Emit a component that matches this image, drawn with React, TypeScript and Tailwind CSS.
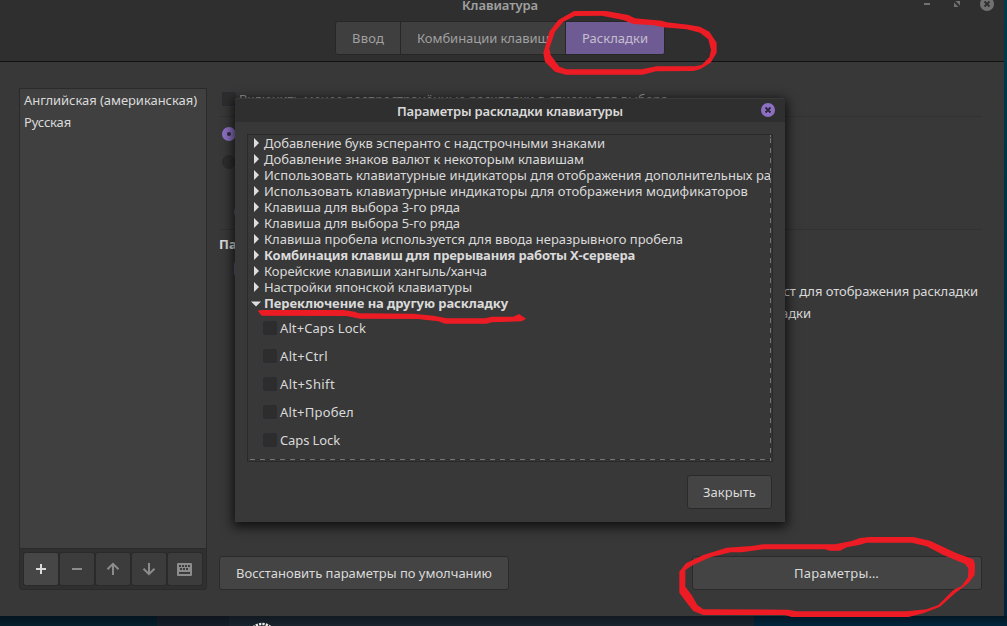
import React, { useLayoutEffect, useRef } from "react";

type TextProps = { w: number; children: string; className?: string };

/* Text spaced out so that its line takes exactly w pixels. */
function T({ w, children, className = "" }: TextProps) {
  const ref = useRef<HTMLSpanElement>(null);
  useLayoutEffect(() => {
    const el = ref.current;
    if (!el) return;
    el.style.letterSpacing = "0px";
    const natural = el.getBoundingClientRect().width;
    el.style.letterSpacing = `${(w - natural) / children.length}px`;
  }, [w, children]);
  return (
    <span ref={ref} className={`inline-block shrink-0 whitespace-pre ${className}`}>
      {children}
    </span>
  );
}

const groups: { text: string; w: number; bold?: boolean; open?: boolean }[] = [
  { text: "Добавление букв эсперанто с надстрочными знаками", w: 341 },
  { text: "Добавление знаков валют к некоторым клавишам", w: 320 },
  { text: "Использовать клавиатурные индикаторы для отображения дополнительных раскладок", w: 558 },
  { text: "Использовать клавиатурные индикаторы для отображения модификаторов", w: 484 },
  { text: "Клавиша для выбора 3-го ряда", w: 196 },
  { text: "Клавиша для выбора 5-го ряда", w: 196 },
  { text: "Клавиша пробела используется для ввода неразрывного пробела", w: 419 },
  { text: "Комбинация клавиш для прерывания работы X-сервера", w: 371, bold: true },
  { text: "Корейские клавиши хангыль/ханча", w: 223 },
  { text: "Настройки японской клавиатуры", w: 208 },
  { text: "Переключение на другую раскладку", w: 244, bold: true, open: true },
];

const options = [
  { text: "Alt+Caps Lock", w: 86 },
  { text: "Alt+Ctrl", w: 48 },
  { text: "Alt+Shift", w: 55 },
  { text: "Alt+Пробел", w: 74 },
  { text: "Caps Lock", w: 60 },
];

function Check() {
  return <span className="h-[14px] w-[14px] shrink-0 rounded-[2px] border border-[#2b2b33] bg-[#2d2d2d]" />;
}

function CloseIcon({ disc, mark }: { disc: string; mark: string }) {
  return (
    <svg width="14" height="14" viewBox="0 0 14 14" className="block">
      <circle cx="7" cy="7" r="7" fill={disc} />
      <path d="M4.500 4.500l5 5M9.500 4.500l-5 5" stroke={mark} strokeWidth="1.800" />
    </svg>
  );
}

function ToolButton({ active, children }: { active?: boolean; children: React.ReactNode }) {
  return (
    <div
      className={`flex h-8 w-[34px] items-center justify-center rounded-[2px] ${
        active ? "bg-[#464646] text-[#dadada]" : "bg-[#3c3c3c] text-[#8c8c8c]"
      } shadow-[0_0_0_1px_#2a2a2a]`}
    >
      <svg width="16" height="16" viewBox="0 0 16 16" fill="none" stroke="currentColor" strokeWidth="2">
        {children}
      </svg>
    </div>
  );
}

function Header() {
  return (
    <header className="relative flex h-[62px] flex-col items-center border-b border-[#111] bg-[#2f2f2f] text-[#a0a0a0]">
      <div className="flex h-[21px] w-full items-start justify-center pr-1">
        <T w={76} className="-mt-[4px] font-semibold leading-[18px]">Клавиатура</T>
      </div>
      <div className="ml-[335px] flex h-[34px] w-[330px] self-start overflow-hidden rounded-[3px] border border-[#272727] bg-[#3f3f3f]">
        <div className="flex w-[65px] items-center justify-center border-r border-[#272727]">
          <T w={32}>Ввод</T>
        </div>
        <div className="flex w-[165px] items-center border-r border-[#272727] pl-4">
          <T w={132}>Комбинации клавиш</T>
        </div>
        <div className="flex flex-1 items-center justify-center bg-[#6f5b93] text-[#c4bed0]">
          <T w={66}>Раскладки</T>
        </div>
      </div>
      <div className="absolute right-[10px] top-[-3px] flex h-[14px] items-center text-[#717171]">
        <svg width="66" height="14" viewBox="0 0 66 14" fill="currentColor" className="mr-[-10px]">
          <path d="M0 6h6v2H0zM31.500 4h4.500v4.500zM30 5.500v4.500h4.500z" />
        </svg>
        <CloseIcon disc="#717171" mark="#2f2f2f" />
      </div>
    </header>
  );
}

function Sidebar() {
  return (
    <aside className="flex h-[502px] w-[188px] shrink-0 flex-col rounded-b-[3px] border border-[#2a2a2a] bg-[#303030]">
      <div className="flex h-[460px] flex-col items-start border-b border-[#2a2a2a] bg-[#404040] pl-1">
        <T w={173} className="h-[22px] leading-[23px]">Английская (американская)</T>
        <T w={47} className="h-[22px] leading-[23px]">Русская</T>
      </div>
      <div className="flex flex-1 items-center gap-[2px] pl-1">
        <ToolButton active>
          <path d="M3 8h10M8 3v10" />
        </ToolButton>
        <ToolButton>
          <path d="M3 8h10" />
        </ToolButton>
        <ToolButton>
          <path d="M8 14V3M2.500 8.300L8 2.800l5.500 5.500" />
        </ToolButton>
        <ToolButton>
          <path d="M8 2v11M2.500 7.700L8 13.200l5.500-5.500" />
        </ToolButton>
        <ToolButton>
          <g stroke="none">
            <rect x="0" y="2" width="15" height="13" rx="1" fill="currentColor" />
            <path
              d="M2 4h2v2H2zM5 4h2v2H5zM8 4h2v2H8zM11 4h2v2h-2zM3 7h2v2H3zM6 7h2v2H6zM9 7h2v2H9zM2 11h11v2H2z"
              fill="#3c3c3c"
            />
          </g>
        </ToolButton>
      </div>
    </aside>
  );
}

function Settings() {
  return (
    <main className="ml-3 flex h-[502px] w-[763px] flex-col">
      <div className="flex h-[29px] items-center gap-[3px] border-b border-[#313131] pb-[6px] pl-[3px]">
        <Check />
        <T w={429} className="-mt-px text-[#969696]">Включить менее распространённые раскладки в список для выбора</T>
      </div>
      <div className="flex h-[113px] flex-col gap-[14px] border-b border-[#313131] pl-[3px] pt-[10px]">
        <span className="flex h-[14px] w-[14px] items-center justify-center rounded-full bg-[#8d70c4]">
          <span className="h-1 w-1 rounded-full bg-[#2d2d38]" />
        </span>
        <span className="h-[14px] w-[14px] rounded-full border border-[#2b2b33] bg-[#2d2d2d]" />
        <span className="ml-[12px] mt-[22px] h-[14px] w-[14px] rounded-full bg-[#6f5b93]" />
      </div>
      <div className="flex h-[32px] items-center pb-[4px]">
        <T w={78} className="font-bold">Параметры</T>
      </div>
      <div className="ml-[15px] h-[14px] w-[14px] rounded-[2px] bg-[#6f5b93]" />
      <div className="flex h-[22px] items-center justify-end pr-1 pt-[8px]">
        <T w={214}>текст для отображения раскладки</T>
      </div>
      <div className="flex h-[22px] items-center justify-end pr-[171px] pt-[8px]">
        <T w={66}>раскладки</T>
      </div>
      <div className="mt-auto flex justify-between">
        <button className="flex h-[34px] w-[290px] items-center justify-center rounded-[3px] border border-[#2a2a2a] bg-[#444]">
          <T w={256}>Восстановить параметры по умолчанию</T>
        </button>
        <button className="flex h-[34px] w-[290px] items-center justify-center rounded-[3px] border border-[#2a2a2a] bg-[#444] pr-px">
          <T w={85}>Параметры…</T>
        </button>
      </div>
    </main>
  );
}

function Dialog() {
  return (
    <section className="absolute left-[235px] top-[98px] flex h-[424px] w-[550px] flex-col rounded-t-[3px] bg-[#383838] shadow-[0_3px_12px_2px_rgba(0,0,0,0.75)]">
      <div className="relative flex h-6 items-center justify-center rounded-t-[3px] border-t border-[#3a3a3a] bg-[#2f2f2f] pb-px">
        <T w={226} className="mt-px font-semibold">Параметры раскладки клавиатуры</T>
        <div className="absolute right-[10px] top-[4px]">
          <CloseIcon disc="#8d70c4" mark="#2b2638" />
        </div>
      </div>
      <div className="relative mx-3 mt-3 h-[328px] overflow-hidden border border-[#2a2a2a]">
        <div className="w-[523px] overflow-hidden">
          {groups.map((g) => (
            <div key={g.text} className="flex h-4 items-center">
              <span className="flex w-4 shrink-0 justify-center">
                <svg width="10" height="10" viewBox="0 0 10 10" fill="#dedede">
                  {g.open ? <path d="M0 3.500h10L5 8.500z" /> : <path d="M3 0v10l5-5z" />}
                </svg>
              </span>
              <T w={g.w} className={g.bold ? "font-bold leading-4" : "leading-4"}>
                {g.text}
              </T>
            </div>
          ))}
          <div className="flex flex-col pl-[15px] pt-[3px]">
            {options.map((o) => (
              <div key={o.text} className="flex h-7 items-center gap-[3px]">
                <Check />
                <T w={o.w}>{o.text}</T>
              </div>
            ))}
          </div>
        </div>
        <div className="absolute right-px top-0 h-full w-px bg-[repeating-linear-gradient(to_bottom,#777_0_5px,#2c2c2c_5px_10px)] [background-position:0_3px]" />
        <div className="absolute bottom-[1px] left-[2px] h-px w-[521px] bg-[repeating-linear-gradient(to_right,#777_0_5px,#2c2c2c_5px_10px)]" />
      </div>
      <button className="ml-[452px] mt-[13px] flex h-[34px] w-[85px] items-center justify-center rounded-[3px] border border-[#2a2a2a] bg-[#444]">
        <T w={53}>Закрыть</T>
      </button>
    </section>
  );
}

function Marker() {
  return (
    <svg width="1007" height="626" viewBox="0 0 1007 626" className="pointer-events-none absolute left-0 top-0" fill="#ed1c24" fillRule="evenodd">
      <path
        transform="translate(300 0) scale(.33333)"
        d="M822 33L918 33L985 45L1005 55L1085 62L1100 67L1165 74L1200 80L1228 95L1250 128L1250 158L1232 188L1200 208L1180 213L1068 214L1028 224L798 224L765 215L735 185L730 160L748 95L775 60ZM825 48L905 47L970 60L1000 72L1060 76L1090 82L1160 88L1200 98L1225 118L1233 150L1228 172L1205 195L1185 199L1070 199L1025 208L800 208L778 200L752 165L748 145L765 95L790 65Z"
      />
      <path
        transform="translate(660 440) scale(.33333)"
        d="M200 323L275 318L310 313L525 313L575 303L600 294L630 291L760 291L810 302L890 340L940 358L945 372L944 405L925 430L885 460L840 500L790 520L745 531L395 531L375 525L130 525L100 513L78 485L58 458L58 395L78 370L130 345ZM212 337L245 337L310 328L495 328L510 332L540 332L560 322L600 314L620 308L755 308L800 319L850 345L915 372L925 385L924 412L905 438L880 450L835 495L800 508L740 514L410 514L385 509L130 508L112 495L95 465L76 440L76 390L95 377L150 352Z"
      />
      <path
        transform="translate(220 260) scale(.33333)"
        d="M113 152L125 150L370 150L405 155L415 160L580 161L640 167L680 175L795 175L815 170L880 170L897 162L918 176L905 184L815 187L800 191L675 191L655 184L620 180L595 177L420 176L380 168L125 167Z"
      />
    </svg>
  );
}

export default function App() {
  return (
    <div className="relative h-[626px] w-[1007px] overflow-hidden bg-linear-to-b from-[#003a4c] to-[#02223a] font-['Noto_Sans',sans-serif] text-[13px] leading-[18px] text-[#dadada]">
      <div className="h-[616px] w-[1004px] bg-[#383838]">
        <Header />
        <div className="flex pl-[19px] pt-[26px]">
          <Sidebar />
          <Settings />
        </div>
      </div>
      <div className="flex h-[10px] w-full">
        <div className="w-[157px] bg-linear-to-b from-[#03141e] to-[#05202e]" />
        <div className="w-[72px] bg-linear-to-b from-[#0e141c] to-[#151e29]" />
        <div className="w-[525px] bg-linear-to-b from-[#111921] to-[#19242f] pl-[20px]">
          <svg width="26" height="10" viewBox="0 0 26 10" className="block" fill="none">
            <circle cx="13" cy="21" r="14" fill="#101418" />
            <circle cx="13" cy="21" r="13" stroke="#e8e8e8" strokeWidth="2.500" strokeDasharray="2.400 1" />
          </svg>
        </div>
        <div className="flex-1 bg-linear-to-b from-[#021826] to-[#02253c]" />
      </div>
      <Dialog />
      <Marker />
    </div>
  );
}
